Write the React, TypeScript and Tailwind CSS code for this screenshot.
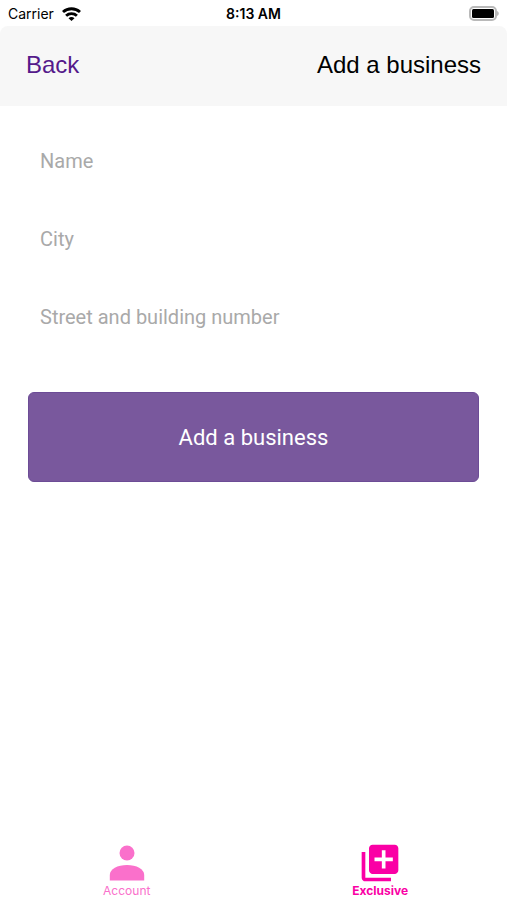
import { MdLibraryAdd } from "react-icons/md";

const fields = [
  { id: "name", label: "Name" },
  { id: "city", label: "City" },
  { id: "address", label: "Street and building number" },
];

const WifiIcon = () => (
  <svg width="19" height="14" viewBox="0 0 19 14" fill="none" stroke="#000" strokeWidth="2.9" aria-hidden="true">
    <path d="M1 5C5.8.6 13.2.6 18 5" />
    <path d="M4.1 8.7c3-2.8 7.8-2.8 10.8 0" />
    <path d="M9.5 14 6.5 11.2c1.7-1.5 4.3-1.5 6 0z" fill="#000" stroke="none" />
  </svg>
);

const BatteryIcon = () => (
  <svg width="30" height="15" viewBox="0 0 30 15" aria-hidden="true">
    <rect x="1" y="1" width="26" height="13" rx="4" fill="#fff" stroke="#b9b9b9" strokeWidth="2" />
    <rect x="3" y="3" width="22" height="9" rx="1.5" fill="#000" />
    <path d="M28 5v5c1.1-.5 1.8-1.4 1.8-2.5S29.1 5.5 28 5z" fill="#b9b9b9" />
  </svg>
);

const PersonIcon = () => (
  <svg width="36" height="36" viewBox="0 0 36 36" fill="#fa70cb" aria-hidden="true">
    <circle cx="18" cy="8" r="7.5" />
    <path d="M.8 35.5V30C.8 24 8.5 20 18 20S35.2 24 35.2 30V35.5z" />
  </svg>
);

const StatusBar = () => (
  <div className="grid h-[26px] grid-cols-3 items-center px-2 pt-px font-['Inter',sans-serif] text-sm text-black">
    <div className="flex items-center gap-2">
      <span>Carrier</span>
      <WifiIcon />
    </div>
    <span className="text-center font-semibold">8:13 AM</span>
    <div className="flex justify-end">
      <BatteryIcon />
    </div>
  </div>
);

const Header = () => (
  <header className="flex h-20 items-center justify-between rounded-t-lg bg-[#f7f7f7] px-[26px] pb-0.5 font-['Liberation_Sans',Arial,sans-serif] text-2xl">
    <a href="#back" className="text-[#551a8b]">Back</a>
    <h1 className="text-black">Add a business</h1>
  </header>
);

const BusinessForm = () => (
  <form className="flex flex-col px-7 pt-4 font-['Roboto',sans-serif]" onSubmit={(e) => e.preventDefault()}>
    {fields.map((field) => (
      <div key={field.id} className="flex h-[78px] items-center">
        <input
          id={field.id}
          type="text"
          aria-label={field.label}
          placeholder={field.label}
          className="w-full bg-white px-3 py-2 text-xl text-black outline-none placeholder:text-[#a9a9a9]"
        />
      </div>
    ))}
    <button type="submit" className="mt-9 h-[90px] rounded-md border border-[#6c4c96] bg-[#79589d] text-[22px] text-white">
      Add a business
    </button>
  </form>
);

const TabBar = () => (
  <nav className="mt-auto grid grid-cols-2 pb-[3px] font-['Inter',sans-serif] text-xs leading-3">
    <a href="#account" className="flex flex-col items-center text-[#fa70cb]">
      <span className="flex h-11 items-center">
        <PersonIcon />
      </span>
      <span>Account</span>
    </a>
    <a href="#exclusive" className="flex flex-col items-center font-bold text-[#fa00a5]">
      <MdLibraryAdd size={44} aria-hidden="true" />
      <span>Exclusive</span>
    </a>
  </nav>
);

export default function App() {
  return (
    <div className="flex min-h-screen flex-col bg-white">
      <StatusBar />
      <Header />
      <BusinessForm />
      <TabBar />
    </div>
  );
}
